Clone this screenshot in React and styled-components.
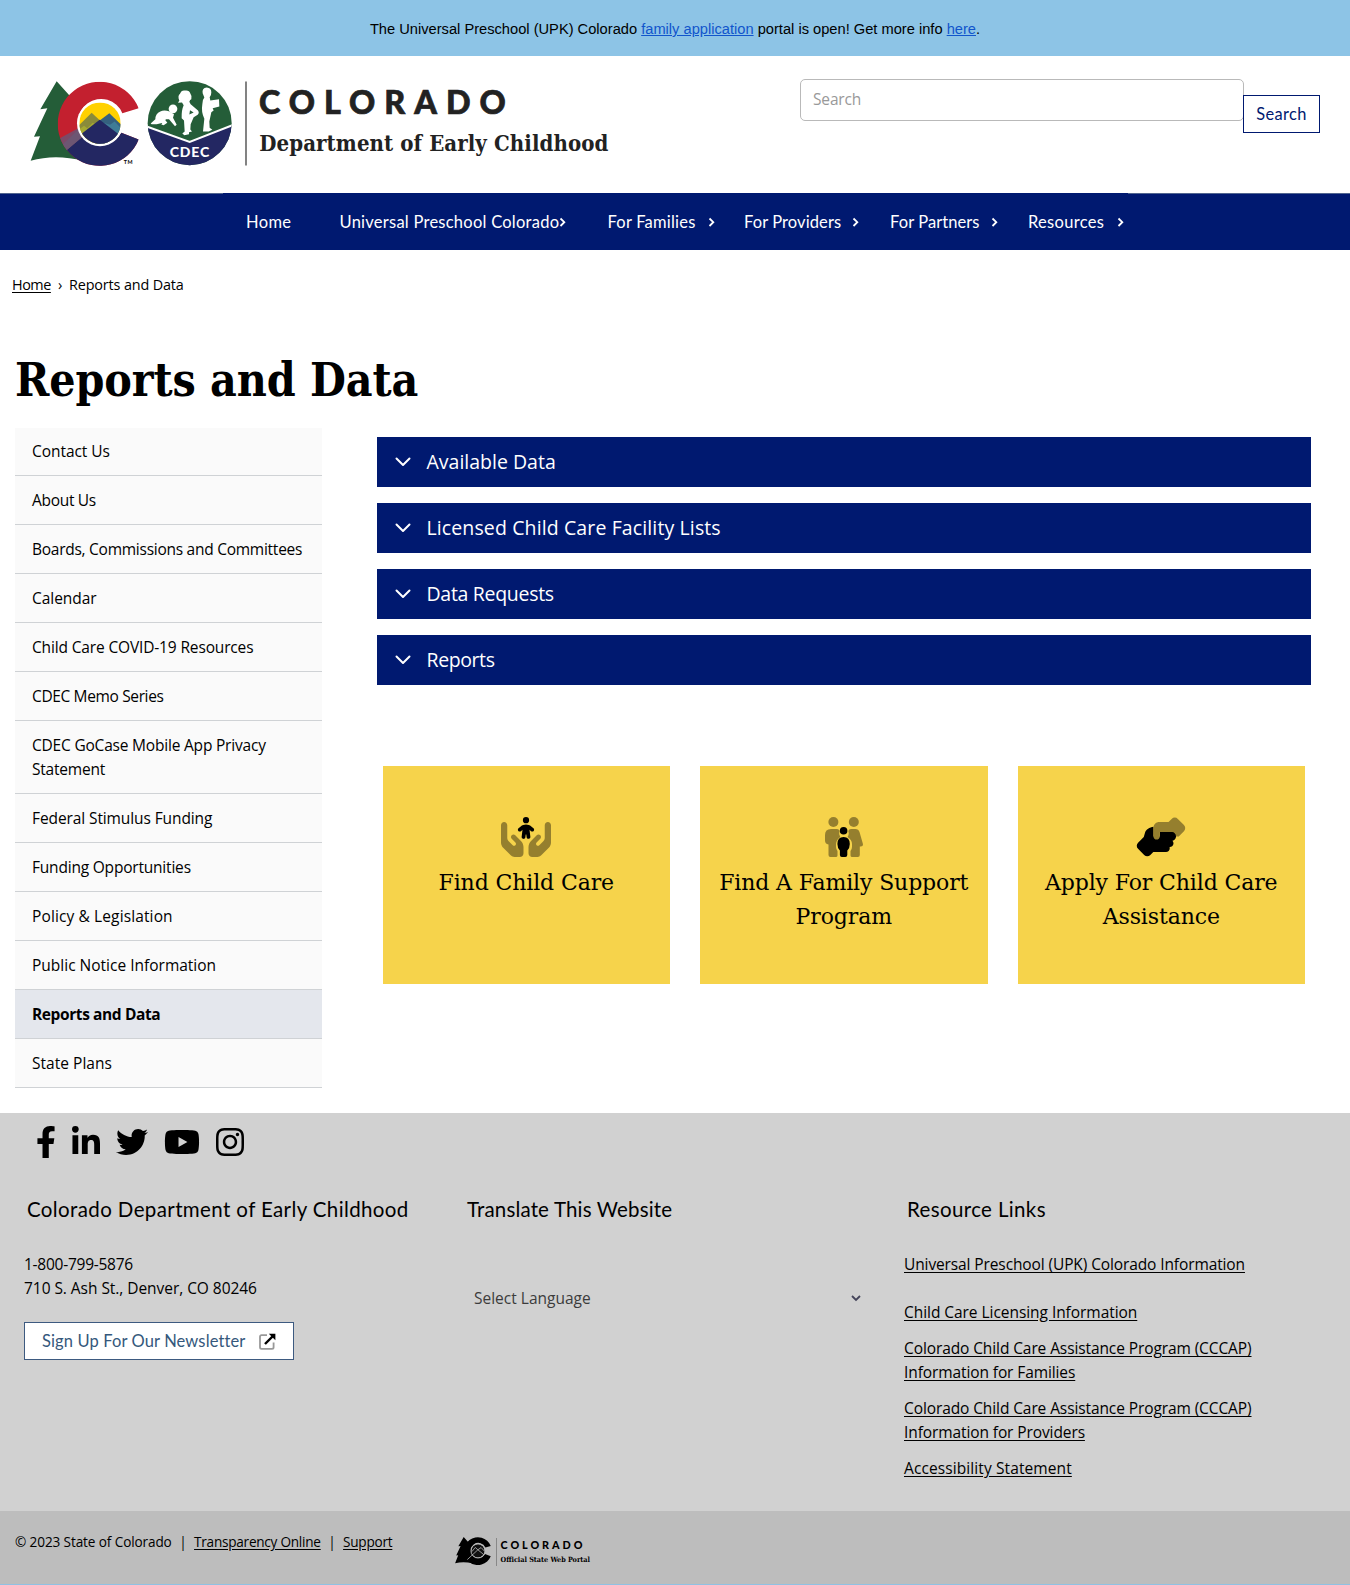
import React from 'react';
import styled, { createGlobalStyle, css } from 'styled-components';
import { FaFacebookF, FaLinkedinIn, FaTwitter, FaYoutube, FaInstagram } from 'react-icons/fa';

const bodyFont = '"Open Sans", "Noto Sans", sans-serif';
const museoSans = 'Lato, "Open Sans", sans-serif';
const museoSlab = '"DejaVu Serif", serif';
const slabBold = '"DejaVu Serif Condensed", "DejaVu Serif", serif';
const navy = '#001970';

const GlobalStyle = createGlobalStyle`
  *, *::before, *::after { box-sizing: border-box; }
  body {
    margin: 0;
    background: #fff;
    color: #000;
    font: 15.5px/24px ${bodyFont};
  }
  h1, h2, h3, p, ul { margin: 0; padding: 0; font-weight: 400; }
  ul { list-style: none; }
  svg { display: block; flex: none; }
`;

const Page = styled.div`
  width: 1350px;
  height: 1585px;
  display: flex;
  flex-direction: column;
  border-bottom: 1px solid #8fc1e3;
  overflow: hidden;
`;

const Banner = styled.div`
  height: 56px;
  padding-top: 17px;
  background: #8dc4e6;
  text-align: center;
  font: 14.67px/24px "Liberation Sans", Arial, sans-serif;
  a { color: #1155cc; }
`;

const Header = styled.header`
  height: 137px;
  padding: 23px 30px 0;
  display: flex;
  justify-content: space-between;
  align-items: flex-start;
`;

const LogoLink = styled.a`
  padding-top: 1px;
`;

const SearchForm = styled.form`
  display: flex;
  align-items: flex-start;
`;

const SearchInput = styled.input`
  width: 444px;
  height: 42px;
  padding: 0 12px 2px;
  border: 1px solid #b9b9b9;
  border-radius: 5px;
  outline: none;
  background: #fff;
  font: 15.5px/24px ${bodyFont};
  letter-spacing: -0.15px;
  &::placeholder { color: #999; opacity: 1; }
`;

const SearchButton = styled.button`
  width: 77px;
  height: 38px;
  margin: 16px 0 0 -1px;
  padding: 0;
  border: 1px solid ${navy};
  background: #fff;
  color: ${navy};
  font: 16.4px/24px ${museoSans};
  letter-spacing: 0.4px;
`;

const Nav = styled.nav`
  height: 57px;
  background: linear-gradient(#51658f 1px, ${navy} 1px);
`;

const NavList = styled.ul`
  width: 905px;
  height: 57px;
  margin-left: 223px;
  padding-left: 23px;
  display: grid;
  grid-template-columns: 93.5px 268px 136.5px 146px 138px auto;
  align-items: center;
  background: ${navy};
`;

const NavItem = styled.li`
  display: flex;
  align-items: center;
  gap: ${p => p.$gap}px;
  color: #fff;
  font: 16.5px/24px ${museoSans};
  letter-spacing: ${p => p.$ls}px;
  white-space: nowrap;
`;

const Breadcrumb = styled.div`
  height: 72px;
  padding: 23px 12px 0;
  display: flex;
  gap: 7px;
  font-size: 14.4px;
  letter-spacing: -0.15px;
  a { color: #000; letter-spacing: -0.45px; text-underline-offset: 2px; }
`;

const Title = styled.h1`
  height: 106px;
  padding: 28px 0 0 15px;
  font: 700 46px/60px ${slabBold};
  letter-spacing: -0.1px;
`;

const Main = styled.main`
  height: 685px;
  padding: 0 39px 0 15px;
  display: grid;
  grid-template-columns: 307px 934.5px;
  justify-content: space-between;
  align-items: start;
`;

const SideItem = styled.li`
  padding: 12px 10px 12px 17px;
  border-bottom: 1px solid #cfd2d5;
  background: #fafafa;
  letter-spacing: ${p => p.$ls}px;
  &:first-child { padding-top: 11px; }
  ${p => p.$active && css`
    background: #e4e7ed;
    font-weight: 700;
  `}
`;

const Content = styled.section`
  padding-top: 9px;
`;

const Accordion = styled.div`
  display: flex;
  flex-direction: column;
  gap: 16px;
`;

const Panel = styled.div`
  height: 50px;
  padding-left: 18px;
  display: flex;
  align-items: center;
  gap: 16px;
  background: ${navy};
  color: #fff;
  font-size: 19.5px;
  letter-spacing: ${p => p.$ls}px;
`;

const Cards = styled.div`
  padding: 81px 6px 0;
  display: grid;
  grid-template-columns: repeat(3, 1fr);
  gap: 30px;
`;

const Card = styled.div`
  height: 218px;
  padding-top: 51px;
  display: flex;
  flex-direction: column;
  align-items: center;
  gap: 9px;
  background: #f6d34b;
`;

const CardTitle = styled.h3`
  padding: 0 10px;
  text-align: center;
  font: 22px/34px ${museoSlab};
  letter-spacing: -0.12px;
`;

const Footer = styled.footer`
  height: 398px;
  padding-top: 13px;
  background: #d1d1d1;
`;

const Social = styled.div`
  height: 32px;
  padding-left: 35.5px;
  display: flex;
  gap: 16px;
`;

const SocialIcon = styled.a`
  width: ${p => p.$w}px;
  height: 32px;
  color: #000;
  svg { width: ${p => p.$w}px; height: 32px; }
`;

const FooterColumns = styled.div`
  padding: 37px 24px 0;
  display: grid;
  grid-template-columns: 440px 440px 1fr;
`;

const FooterHeading = styled.h2`
  padding-left: 3px;
  margin-bottom: 29px;
  font: 20.5px/28px ${museoSans};
  letter-spacing: ${p => p.$ls}px;
`;

const ContactLine = styled.p`
  letter-spacing: ${p => p.$ls}px;
`;

const Newsletter = styled.button`
  width: 270px;
  height: 38px;
  margin-top: 22px;
  padding: 0 17px;
  display: flex;
  align-items: center;
  justify-content: space-between;
  border: 1px solid #3d5a80;
  background: #fff;
  color: #35587c;
  font: 16.5px/24px ${museoSans};
  letter-spacing: 0.12px;
  white-space: nowrap;
`;

const LanguageSelect = styled.div`
  padding: 34px 43px 0 10px;
  display: flex;
  align-items: center;
  justify-content: space-between;
  color: #3c3c3c;
`;

const Links = styled.ul`
  width: 370px;
  display: flex;
  flex-direction: column;
  gap: 12px;
  li:first-child { margin-bottom: 12px; }
`;

const ResourceLink = styled.a`
  color: #000;
  letter-spacing: ${p => p.$ls}px;
  text-underline-offset: 2px;
`;

const BottomBar = styled.div`
  height: 73px;
  padding: 19px 15px 0;
  display: flex;
  background: #bdbdbd;
  font-size: 13.6px;
`;

const Legal = styled.p`
  width: 440px;
  display: flex;
  gap: 7.5px;
  letter-spacing: -0.12px;
  a { color: #000; letter-spacing: -0.25px; text-underline-offset: 2px; }
`;

const PortalLogo = styled.div`
  padding-top: 7px;
`;

const NavArrow = () => (
  <svg width="7" height="10" viewBox="0 0 7 10" fill="none" stroke="#fff" strokeWidth="1.8">
    <path d="M1.5 1.5 5.3 5.2 1.5 9" />
  </svg>
);

const PanelArrow = () => (
  <svg width="16" height="12" viewBox="0 0 16 12" fill="none" stroke="#fff" strokeWidth="2" strokeLinecap="round" strokeLinejoin="round">
    <path d="M1.5 2.5 8 9 14.5 2.5" />
  </svg>
);

const SelectArrow = () => (
  <svg width="10" height="7" viewBox="0 0 10 7" fill="none" stroke="#44445a" strokeWidth="1.8">
    <path d="M1 1 5 5 9 1" />
  </svg>
);

const ExternalIcon = () => (
  <svg width="17" height="17" viewBox="0 0 17 17" fill="none">
    <path d="M8 2.2H2.6Q1 2.2 1 3.8V14.2Q1 15.8 2.6 15.8H13Q14.6 15.8 14.6 14.2V9.5" stroke="#999" strokeWidth="1.8" />
    <path d="M6 11 14 3" stroke="#000" strokeWidth="2.4" />
    <path d="M9.8 .7H16.4V7.3Z" fill="#000" />
  </svg>
);

const TREE = 'M170 93 121 177 142 174 102 260 120 258 92 332Q165 311 250 332L230 160Z';
const C_SHAPE = 'M416 174A126 126 0 1 0 416 268L364 248A69 69 0 1 1 367 189Z';

const StateLogo = () => (
  <svg width="580" height="86" viewBox="90 89.5 1740 258">
    <defs>
      <clipPath id="cClip"><path d={C_SHAPE} /></clipPath>
      <clipPath id="discClip"><circle cx="300" cy="219" r="62" /></clipPath>
      <clipPath id="sealClip"><circle cx="569" cy="219" r="126" /></clipPath>
    </defs>
    <path d={TREE} fill="#245d38" />
    <g clipPath="url(#cClip)">
      <rect x="170" y="90" width="250" height="260" fill="#c3202f" />
      <path d="M170 269 250 226 300 290 205 300 170 330Z" fill="#7b4a68" />
      <path d="M196 303 245 262 300 218 420 218V350H170V330Z" fill="#232762" />
      <path d="M170 300 235 238 245 262 196 303Z" fill="#6d5673" />
    </g>
    <circle cx="300" cy="219" r="69" fill="#fff" />
    <g clipPath="url(#discClip)">
      <rect x="238" y="157" width="124" height="124" fill="#ffd100" />
      <path d="M234 228 275 188 312 222 300 290H234Z" fill="#8a8b3a" />
      <path d="M234 240 252 227 262 234 278 218 300 230V260H234Z" fill="#a5a832" />
      <path d="M290 218 328 189 370 230V290H290Z" fill="#35617f" />
      <path d="M310 218 330 224 344 214 370 242V270Z" fill="#3f7c96" />
      <path d="M230 262 299 209 366 260V290H230Z" fill="#232762" />
    </g>
    <text x="371" y="342" fontFamily="Lato, sans-serif" fontSize="16" fontWeight="700" textLength="27">TM</text>

    <g clipPath="url(#sealClip)">
      <rect x="440" y="90" width="258" height="260" fill="#245d38" />
      <path d="M440 227 569 274 700 225V350H440Z" fill="#232762" />
      <path d="M440 229 569 275 700 224" fill="none" stroke="#fff" strokeWidth="6" />
    </g>
    <g fill="#fff">
      <circle cx="519" cy="176" r="13" />
      <path d="M452 220 466 207Q466 191 481 184 492 178 509 184L522 192 519 203 530 224 525 228 507 207 498 207 489 218 470 222 455 222ZM494 207 502 218 491 225 484 223Z" />
      <path d="M538 151Q532 138 540 131 544 119 555 121 568 119 571 130 576 136 574 147 570 148 568 155L572 162 594 181Q599 188 593 194L581 201 572 222 571 238 576 244 567 246 567 252 553 255 547 250 554 244 552 211 545 204Q544 180 551 165L546 157 534 158ZM570 180 568 193 581 187Z" fillRule="evenodd" />
      <path d="M608 129Q605 114 620 112 634 113 634 126 634 136 629 141L631 151 657 147 658 169 638 174 641 181 634 186 628 214 629 233 637 239 626 244 609 244 613 206Q603 184 607 162 607 148 613 142Z" />
    </g>
    <text x="509" y="320" fill="#fff" fontFamily="Lato, sans-serif" fontSize="42" fontWeight="900" textLength="119">CDEC</text>

    <path d="M738 94V346" stroke="#444" strokeWidth="4" />
    <text x="777" y="193" fill="#222" stroke="#222" strokeWidth="2" fontFamily="Lato, sans-serif" fontSize="97" fontWeight="900" textLength="740">COLORADO</text>
    <text x="778" y="304" fill="#222" fontFamily="DejaVu Serif Condensed, DejaVu Serif, serif" fontSize="66" fontWeight="700" textLength="1047">Department of Early Childhood</text>
  </svg>
);

const PortalMark = () => (
  <svg width="136" height="30" viewBox="0 0 136 30">
    <g transform="translate(-10 -10.2) scale(.11)">
      <path d={TREE} />
      <path d={C_SHAPE} />
      <circle cx="300" cy="219" r="60" fill="#111" />
      <g fill="none" stroke="#bdbdbd" strokeWidth="7">
        <circle cx="300" cy="219" r="65" />
        <path d="M203 298 299 209 355 255M245 225 275 188 299 209 328 189 360 222" />
      </g>
    </g>
    <path d="M41.5 1V29" stroke="#888" />
    <text x="45.5" y="12" fontFamily="Lato, sans-serif" fontSize="10.8" fontWeight="900" textLength="82">COLORADO</text>
    <text x="45.5" y="24.5" fontFamily="DejaVu Serif Condensed, DejaVu Serif, serif" fontSize="7.2" fontWeight="700" textLength="89.5">Official State Web Portal</text>
  </svg>
);

const HAND = 'M40 64c22.1 0 40 17.9 40 40v160.2c0 17 6.7 33.3 18.7 45.3l51.1 51.1c8.3 8.3 21.3 9.6 31 3.1c12.9-8.6 14.7-26.9 3.7-37.8l-47.2-47.2c-12.5-12.5-12.5-32.8 0-45.3s32.8-12.5 45.3 0l72.5 72.5c21 21 32.8 49.5 32.8 79.2V464c0 26.5-21.5 48-48 48H173.3c-17 0-33.3-6.7-45.3-18.7L28.1 393.4C10.1 375.4 0 351 0 325.5V104C0 81.9 17.9 64 40 64z';

const ChildCareIcon = () => (
  <svg width="50" height="40" viewBox="0 0 640 512">
    <g fill="#957f2e">
      <path d={HAND} />
      <path d={HAND} transform="matrix(-1 0 0 1 640 0)" />
    </g>
    <path d="M320 0a40 40 0 1 1 0 80 40 40 0 1 1 0-80zM364.7 164.3 375.8 253c1.6 13.2-7.7 25.1-20.8 26.8s-25.1-7.7-26.8-20.8l-4.4-35h-7.6l-4.4 35c-1.6 13.2-13.6 22.5-26.8 20.8s-22.5-13.6-20.8-26.8l11.1-88.8L255.5 181c-10.1 8.6-25.3 7.3-33.8-2.8s-7.3-25.3 2.8-33.8l27.9-23.6C271.3 104.8 295.3 96 320 96s48.7 8.8 67.6 24.7l27.9 23.6c10.1 8.6 11.4 23.7 2.8 33.8s-23.7 11.4-33.8 2.8l-19.8-16.7z" />
  </svg>
);

const FamilyIcon = () => (
  <svg width="38" height="40" viewBox="0 0 38 40">
    <g fill="#957f2e">
      <circle cx="8.4" cy="5" r="5" />
      <circle cx="28.8" cy="5" r="5" />
      <path d="M6 12h6q2 0 2.5 2-1.2 3.5.8 6-4 3-4.3 7v3q0 2 1.5 4v4.5q0 1.5-1.8 1.5H5.5q-2 0-2-2V27.5Q0 27 0 23.5V18q0-6 6-6z" />
      <path d="M26 12h4.5q3 0 4 3l3.3 11.5q.8 3-2 3h-1V38q0 2-2 2h-5.5q-1.8 0-1.8-1.5V34q1.5-2 1.5-4v-3q0-4-4.5-7 2-2.5.8-6 .6-2 2.7-2z" />
    </g>
    <circle cx="18.6" cy="13.7" r="3.8" />
    <path d="M18.6 20q6.2 0 6.2 7 0 4-2.5 6.5V38q0 2-2 2h-3.400q-2 0-2-2v-4.500Q12.400 31 12.400 27q0-7 6.200-7z" />
  </svg>
);

const AssistanceIcon = () => (
  <svg width="50" height="40" viewBox="0 0 640 512">
    <path d="M304 160v88H224V124c-50 4-98 38-108 73.600L99.500 255.200 26.300 328.400c-21.900 21.900-21.900 57.300 0 79.200l78.100 78.100c21.900 21.900 57.300 21.900 79.200 0l37.700-37.700c.9 0 1.800.1 2.700.1H384c26.500 0 48-21.500 48-48c0-5.600-1-11-2.700-16H432c26.500 0 48-21.500 48-48c0-12.800-5-24.400-13.200-33c25.700-5 45.100-27.600 45.200-54.800v-32c0-31-25-56-56-56z" />
    <path fill="#957f2e" d="M544 248v3.300l69.700-69.700c21.900-21.900 21.900-57.300 0-79.200L535.600 24.400c-21.900-21.900-57.300-21.900-79.200 0L416.300 64.500c-2.700-.3-5.500-.5-8.300-.5H296c-37.100 0-67.600 28-71.600 64H224V248c0 22.100 17.900 40 40 40s40-17.900 40-40V192H464c20 0 48 20 48 56z" />
  </svg>
);

const sideLinks = [
  { label: 'Contact Us', ls: -0.05 },
  { label: 'About Us', ls: -0.3 },
  { label: 'Boards, Commissions and Committees', ls: -0.26 },
  { label: 'Calendar', ls: -0.05 },
  { label: 'Child Care COVID-19 Resources', ls: -0.15 },
  { label: 'CDEC Memo Series', ls: -0.36 },
  { label: 'CDEC GoCase Mobile App Privacy Statement', ls: -0.2 },
  { label: 'Federal Stimulus Funding', ls: -0.1 },
  { label: 'Funding Opportunities', ls: -0.2 },
  { label: 'Policy & Legislation', ls: 0.12 },
  { label: 'Public Notice Information', ls: 0 },
  { label: 'Reports and Data', ls: -0.4, active: true },
  { label: 'State Plans', ls: 0.03 },
];

const panels = [
  { label: 'Available Data', ls: 0 },
  { label: 'Licensed Child Care Facility Lists', ls: 0.12 },
  { label: 'Data Requests', ls: -0.3 },
  { label: 'Reports', ls: -0.4 },
];

const menu = [
  { label: 'Home', gap: 0, ls: 0.35 },
  { label: 'Universal Preschool Colorado', gap: 0, ls: 0.25 },
  { label: 'For Families', gap: 12, ls: 0.22 },
  { label: 'For Providers', gap: 11, ls: 0.1 },
  { label: 'For Partners', gap: 11.5, ls: 0.08 },
  { label: 'Resources', gap: 12.5, ls: 0.3 },
];

const social = [[FaFacebookF, 20], [FaLinkedinIn, 28], [FaTwitter, 32], [FaYoutube, 36], [FaInstagram, 28]];

const resources = [
  { label: 'Universal Preschool (UPK) Colorado Information', ls: -0.11 },
  { label: 'Child Care Licensing Information', ls: -0.05 },
  { label: 'Colorado Child Care Assistance Program (CCCAP) Information for Families', ls: -0.1 },
  { label: 'Colorado Child Care Assistance Program (CCCAP) Information for Providers', ls: -0.1 },
  { label: 'Accessibility Statement', ls: 0.1 },
];

export default function App() {
  return (
    <Page>
      <GlobalStyle />
      <Banner>
        The Universal Preschool (UPK) Colorado <a href="#apply">family application</a> portal is open! Get more info <a href="#info">here</a>.
      </Banner>
      <Header>
        <LogoLink><StateLogo /></LogoLink>
        <SearchForm>
          <SearchInput placeholder="Search" />
          <SearchButton type="button">Search</SearchButton>
        </SearchForm>
      </Header>
      <Nav>
        <NavList>
          {menu.map(({ label, gap, ls }, i) => (
            <NavItem key={label} $gap={gap} $ls={ls}>{label}{i > 0 && <NavArrow />}</NavItem>
          ))}
        </NavList>
      </Nav>
      <Breadcrumb><a href="#home">Home</a><span>›</span><span>Reports and Data</span></Breadcrumb>
      <Title>Reports and Data</Title>
      <Main>
        <ul>
          {sideLinks.map(({ label, ls, active }) => (
            <SideItem key={label} $ls={ls} $active={active}>{label}</SideItem>
          ))}
        </ul>
        <Content>
          <Accordion>
            {panels.map(({ label, ls }) => <Panel key={label} $ls={ls}><PanelArrow />{label}</Panel>)}
          </Accordion>
          <Cards>
            <Card><ChildCareIcon /><CardTitle>Find Child Care</CardTitle></Card>
            <Card><FamilyIcon /><CardTitle>Find A Family Support Program</CardTitle></Card>
            <Card><AssistanceIcon /><CardTitle>Apply For Child Care Assistance</CardTitle></Card>
          </Cards>
        </Content>
      </Main>
      <Footer>
        <Social>
          {social.map(([Icon, w], i) => <SocialIcon key={i} $w={w}><Icon /></SocialIcon>)}
        </Social>
        <FooterColumns>
          <div>
            <FooterHeading $ls={0.38}>Colorado Department of Early Childhood</FooterHeading>
            <ContactLine $ls={-0.25}>1-800-799-5876</ContactLine>
            <ContactLine $ls={-0.05}>710 S. Ash St., Denver, CO 80246</ContactLine>
            <Newsletter>Sign Up For Our Newsletter <ExternalIcon /></Newsletter>
          </div>
          <div>
            <FooterHeading $ls={0.16}>Translate This Website</FooterHeading>
            <LanguageSelect>Select Language <SelectArrow /></LanguageSelect>
          </div>
          <div>
            <FooterHeading $ls={0.36}>Resource Links</FooterHeading>
            <Links>
              {resources.map(({ label, ls }) => (
                <li key={label}><ResourceLink href="#resource" $ls={ls}>{label}</ResourceLink></li>
              ))}
            </Links>
          </div>
        </FooterColumns>
      </Footer>
      <BottomBar>
        <Legal>
          <span>© 2023 State of Colorado</span><span>|</span><a href="#t">Transparency Online</a><span>|</span><a href="#s">Support</a>
        </Legal>
        <PortalLogo><PortalMark /></PortalLogo>
      </BottomBar>
    </Page>
  );
}
